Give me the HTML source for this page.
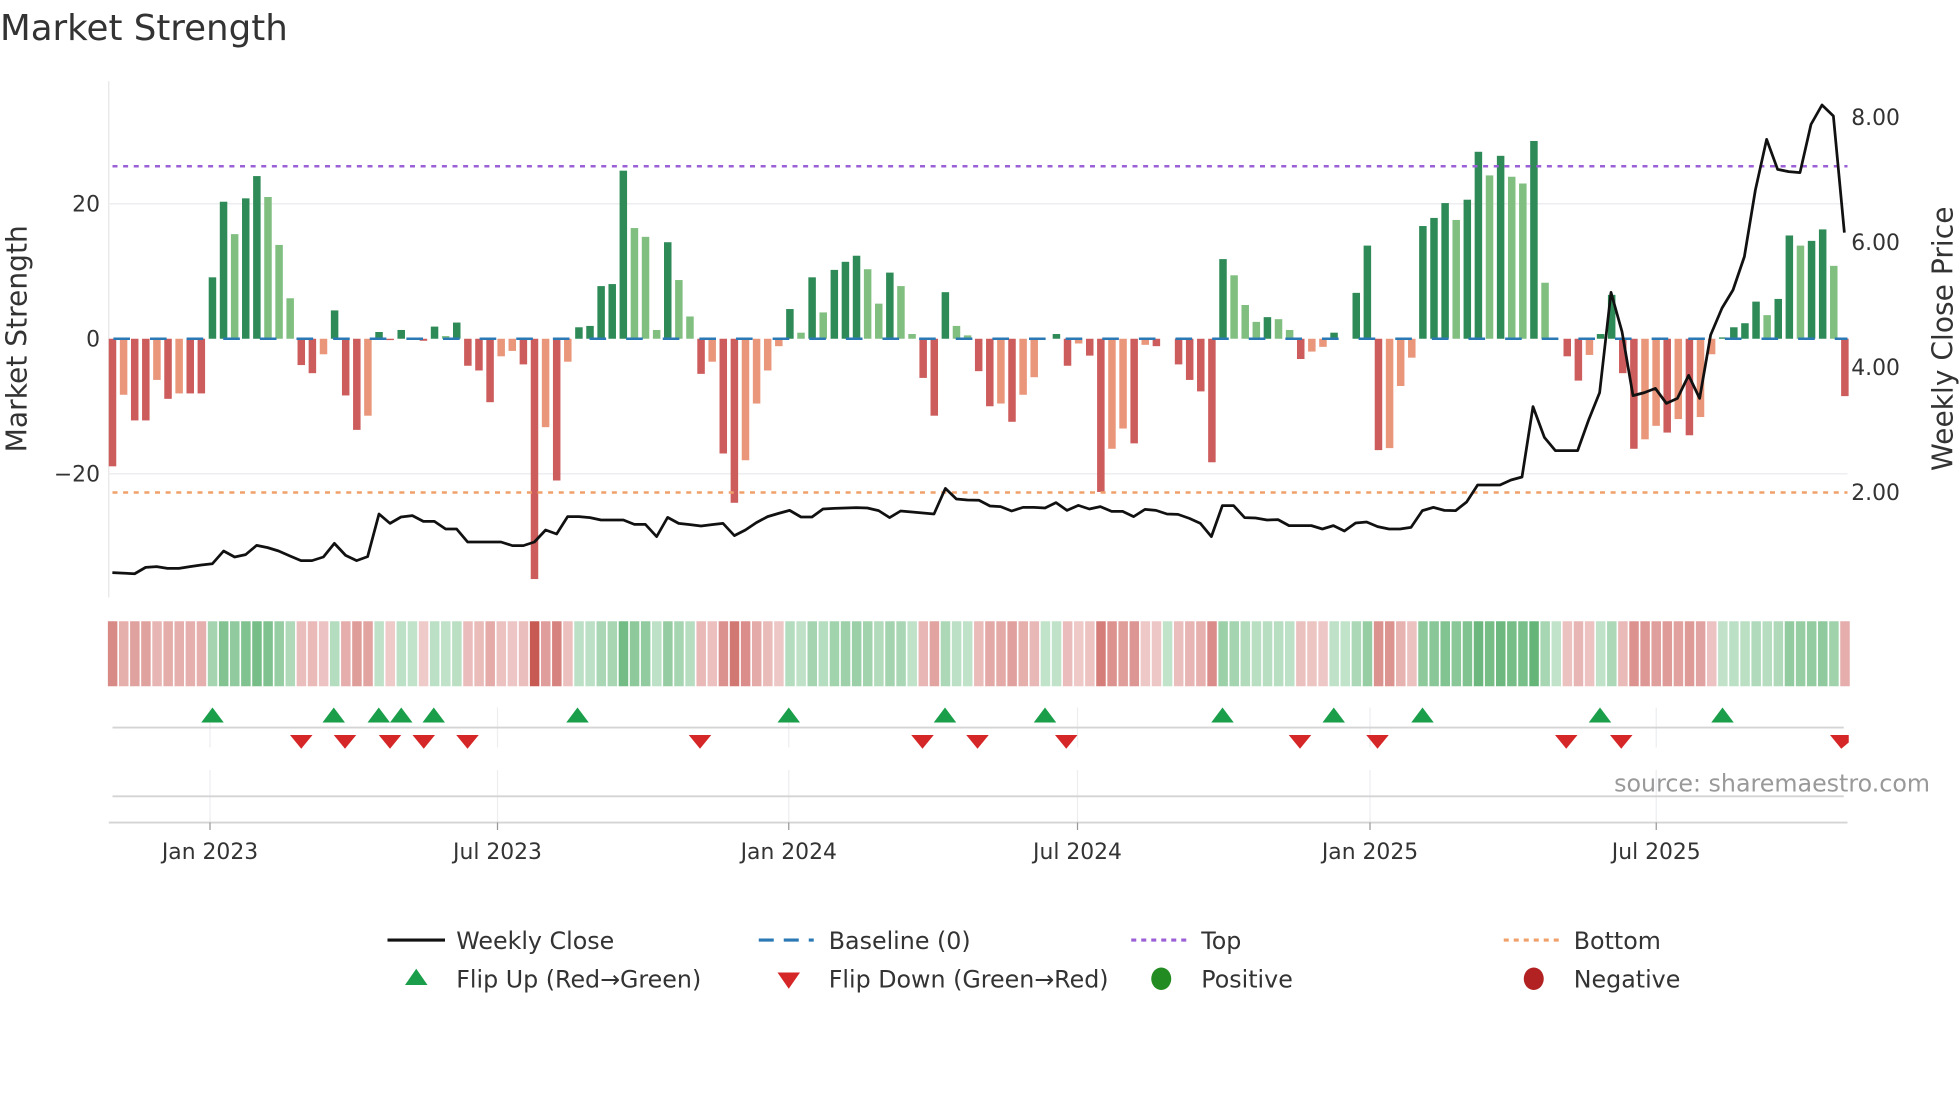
<!DOCTYPE html>
<html><head><meta charset="utf-8">
<style>
html,body{margin:0;padding:0;background:#fff;}
svg{display:block;}
text{font-family:"DejaVu Sans","Liberation Sans",sans-serif;fill:#333;}
</style></head>
<body>
<svg id="c" width="1960" height="1102" viewBox="0 0 1568 881.6" xmlns="http://www.w3.org/2000/svg">
<rect width="1568" height="882" fill="#fff"/>
<text x="0" y="32" font-size="28.5">Market Strength</text>
<line x1="87" y1="65" x2="87" y2="478" stroke="#e6e6e6" stroke-width="1"/>
<line x1="87" y1="163" x2="1478" y2="163" stroke="#eceef0" stroke-width="1.2"/>
<line x1="87" y1="379" x2="1478" y2="379" stroke="#eceef0" stroke-width="1.2"/>
<g id="bars"></g>
<line x1="90" y1="133" x2="1478" y2="133" stroke="#9b5fd6" stroke-width="2" stroke-dasharray="4,4.5"/>
<line x1="90" y1="394" x2="1478" y2="394" stroke="#f0a06a" stroke-width="2" stroke-dasharray="4,4.5"/>
<line x1="90.7" y1="271" x2="1478" y2="271" stroke="#2a78b4" stroke-width="2" stroke-dasharray="13.3,16"/>
<polyline id="price" fill="none" stroke="#111" stroke-width="2.2" stroke-linejoin="round"/>
<g font-size="17.5">
<text x="80" y="169" text-anchor="end">20</text>
<text x="80" y="277" text-anchor="end">0</text>
<text x="80" y="385" text-anchor="end">−20</text>
<text x="1481" y="100">8.00</text>
<text x="1481" y="200">6.00</text>
<text x="1481" y="300">4.00</text>
<text x="1481" y="400">2.00</text>
</g>
<text transform="translate(21,271) rotate(-90)" font-size="22.5" text-anchor="middle">Market Strength</text>
<text transform="translate(1562,271) rotate(-90)" font-size="22.5" text-anchor="middle">Weekly Close Price</text>
<g id="strip"></g>
<g stroke="#eceef0" stroke-width="1">
<line x1="168" y1="566" x2="168" y2="598"/><line x1="398" y1="566" x2="398" y2="598"/>
<line x1="631" y1="566" x2="631" y2="598"/><line x1="862" y1="566" x2="862" y2="598"/>
<line x1="1096" y1="566" x2="1096" y2="598"/><line x1="1325" y1="566" x2="1325" y2="598"/>
<line x1="168" y1="616" x2="168" y2="658"/><line x1="398" y1="616" x2="398" y2="658"/>
<line x1="631" y1="616" x2="631" y2="658"/><line x1="862" y1="616" x2="862" y2="658"/>
<line x1="1096" y1="616" x2="1096" y2="658"/><line x1="1325" y1="616" x2="1325" y2="658"/>
</g>
<line x1="90" y1="582" x2="1475" y2="582" stroke="#d4d4d4" stroke-width="1.5"/>
<line x1="90" y1="637" x2="1475" y2="637" stroke="#d4d4d4" stroke-width="1.5"/>
<line x1="87" y1="658" x2="1478" y2="658" stroke="#d4d4d4" stroke-width="1.5"/>
<g stroke="#999" stroke-width="1">
<line x1="168" y1="658" x2="168" y2="664"/><line x1="398" y1="658" x2="398" y2="664"/>
<line x1="631" y1="658" x2="631" y2="664"/><line x1="862" y1="658" x2="862" y2="664"/>
<line x1="1096" y1="658" x2="1096" y2="664"/><line x1="1325" y1="658" x2="1325" y2="664"/>
</g>
<g id="marks"></g>
<text x="1544" y="633" font-size="19" text-anchor="end" style="fill:#999">source: sharemaestro.com</text>
<g font-size="17.5" text-anchor="middle">
<text x="168" y="687">Jan 2023</text><text x="398" y="687">Jul 2023</text>
<text x="631" y="687">Jan 2024</text><text x="862" y="687">Jul 2024</text>
<text x="1096" y="687">Jan 2025</text><text x="1325" y="687">Jul 2025</text>
</g>
<g font-size="19">
<line x1="310" y1="752" x2="356" y2="752" stroke="#111" stroke-width="2.5"/>
<text x="365" y="759">Weekly Close</text>
<line x1="607" y1="752" x2="651" y2="752" stroke="#2a78b4" stroke-width="2.5" stroke-dasharray="12,8"/>
<text x="663" y="759">Baseline (0)</text>
<line x1="905" y1="752" x2="949" y2="752" stroke="#9b5fd6" stroke-width="2.5" stroke-dasharray="4,4"/>
<text x="961" y="759">Top</text>
<line x1="1203" y1="752" x2="1247" y2="752" stroke="#f0a06a" stroke-width="2.5" stroke-dasharray="4,4"/>
<text x="1259" y="759">Bottom</text>
<polygon points="324,788 342,788 333,775" fill="#1a9e4a"/>
<text x="365" y="790">Flip Up (Red→Green)</text>
<polygon points="622,778 640,778 631,791" fill="#d62728"/>
<text x="663" y="790">Flip Down (Green→Red)</text>
<ellipse cx="929" cy="783" rx="8" ry="9" fill="#228b22"/>
<text x="961" y="790">Positive</text>
<ellipse cx="1227" cy="783" rx="8" ry="9" fill="#b22222"/>
<text x="1259" y="790">Negative</text>
</g>
</svg>
<script>
(function(){
var NS="http://www.w3.org/2000/svg";
var d="R-18.9,O-8.3,R-12.1,R-12.1,O-6.1,R-8.9,O-8.1,R-8.1,R-8.1,D9.1,D20.3,L15.5,D20.8,D24.1,L21,L13.9,L6,R-3.9,R-5.1,O-2.3,D4.2,R-8.4,R-13.5,O-11.4,D1,R-0.2,D1.3,L0.1,R-0.3,D1.8,L0.4,D2.4,R-4,R-4.7,R-9.4,O-2.6,O-1.8,R-3.8,R-35.6,O-13.1,R-21,O-3.4,D1.7,D1.9,D7.8,D8.1,D24.9,L16.4,L15.1,L1.3,D14.3,L8.7,L3.3,R-5.2,O-3.4,R-17,R-24.3,O-18,O-9.6,O-4.7,O-1.1,D4.4,L0.9,D9.1,L3.9,D10.2,D11.4,D12.3,L10.3,L5.2,D9.8,L7.8,L0.7,R-5.8,R-11.4,D6.9,L1.9,L0.5,R-4.8,R-10,O-9.6,R-12.3,O-8.3,O-5.7,D0,D0.7,R-4,O-0.7,R-2.5,R-22.7,O-16.3,O-13.3,R-15.5,O-0.9,R-1.1,D0,R-3.8,R-6.1,R-7.8,R-18.3,D11.8,L9.4,L5,L2.5,D3.2,L2.9,L1.3,R-3,O-1.9,O-1.2,D0.9,D0,D6.8,D13.8,R-16.5,O-16.2,O-7,O-2.8,D16.7,D17.9,D20.1,L17.6,D20.6,D27.7,L24.2,D27.1,L24,L23,D29.3,L8.3,D0,R-2.6,R-6.2,O-2.4,D0.7,D6.5,R-5.1,R-16.3,O-14.9,O-12.9,R-13.9,O-11.9,R-14.3,O-11.6,O-2.3,D0.2,D1.7,D2.3,D5.5,L3.5,D5.9,D15.3,L13.8,D14.5,D16.2,L10.8,R-8.5".split(",");
var col={D:"#2e8b57",L:"#80bf80",R:"#cd5c5c",O:"#e9967a"};
var bars=document.getElementById("bars"),strip=document.getElementById("strip");
function mix(a,b,t){return "rgb("+[0,1,2].map(function(i){return Math.round(a[i]+(b[i]-a[i])*t)}).join(",")+")";}
for(var i=0;i<d.length;i++){
 var t=d[i][0],v=parseFloat(d[i].slice(1)),x=90+i*8.884;
 if(v!==0){var r=document.createElementNS(NS,"rect");
  var h=Math.abs(v)*5.4;r.setAttribute("x",(x-3).toFixed(2));r.setAttribute("width","6");
  r.setAttribute("y",(v>0?271-h:271).toFixed(2));r.setAttribute("height",h.toFixed(2));
  r.setAttribute("fill",col[t]);bars.appendChild(r);}
 var s=document.createElementNS(NS,"rect");
 s.setAttribute("x",(x-3.7).toFixed(2));s.setAttribute("width","7.6");s.setAttribute("y","497");s.setAttribute("height","52");
 var m=Math.min(Math.abs(v)/33,1),tt=0.18+0.82*m;
 s.setAttribute("fill",(t=="R"||t=="O")?mix([247,228,228],[200,90,84],tt):mix([216,238,222],[90,175,110],tt));
 strip.appendChild(s);
}
var p="89.9,458.1 107.7,459 116.5,453.9 125.3,453.3 134,454.7 143.2,454.7 152,453.3 161,452 169.9,451 178.9,440.8 187.7,445.6 196.5,443.7 205.3,436.3 214.1,438.1 222.9,440.8 232,444.8 240.8,448.5 249.6,448.5 258.7,445.6 267.5,434.7 276.5,444.3 285.3,448.5 294.1,445.3 303.2,411.2 312,418.7 320.8,413.6 329.9,412.5 338.7,417.1 347.5,417.1 356.5,423.2 365.3,423.2 374.1,433.6 400.8,433.6 409.9,436.5 418.7,436.5 427.5,433.6 436.5,424 445.3,427.2 454.1,413.3 463.2,413.3 472,414.1 480.8,416 498.7,416 507.5,419.5 516.3,419.5 525.3,429.3 534.1,413.9 542.9,418.7 552,419.7 560.8,420.8 569.6,419.7 578.4,418.7 587.5,428.5 596.3,424 605.1,418.1 614.1,413.3 622.9,410.7 631.7,408.3 640.8,413.6 649.6,413.6 658.4,407.2 667.2,406.7 685.1,406.1 693.9,406.4 702.9,408.5 711.7,414.1 720.5,408.8 729.6,409.6 738.4,410.4 747.2,411.2 756.3,390.7 765.1,399.2 773.9,400 783.2,400.2 792,404.8 800.5,405.3 809.3,408.8 818.4,405.9 827.2,405.9 836,406.4 844.8,402.1 853.6,408.3 862.7,404.3 871.5,407.2 880.3,405.3 889.3,409.1 898.1,409.1 906.9,413.3 916,407.5 924.8,408.3 933.6,411.2 942.4,411.5 951.5,414.7 960.3,418.7 969.1,429.3 977.9,404.5 986.9,404.5 995.7,414.1 1004.5,414.4 1013.6,416 1022.4,415.7 1031.2,420.5 1049.1,420.5 1057.9,423.2 1066.7,420.5 1075.5,424.8 1084.5,418.4 1093.3,417.6 1102.1,421.3 1111.2,423.2 1120,423.2 1128.8,421.9 1137.9,408.5 1146.7,405.9 1155.5,408.3 1164.5,408.5 1173.3,401.6 1182.1,388 1200,388 1208.8,384 1217.6,381.6 1226.4,325.3 1235.5,349.9 1244.3,360.5 1262.1,360.5 1270.9,336 1279.7,314.1 1288.8,233.9 1297.6,265.3 1306.4,316.5 1315.5,314.1 1324.3,310.7 1333.1,322.7 1341.9,318.7 1350.9,300.3 1359.7,318.7 1368.5,268 1377.6,246.5 1386.4,232 1395.5,205.3 1404.3,152 1413.3,111.5 1422.1,135.5 1430.9,137.3 1440,138.1 1448.8,99.5 1457.6,84 1466.7,92.8 1475.5,186.1";
document.getElementById("price").setAttribute("points",p);
var mk=document.getElementById("marks");
[170,267,303,321,347,462,631,756,836,978,1067,1138,1280,1378].forEach(function(x){
 var g=document.createElementNS(NS,"polygon");g.setAttribute("points",(x-9)+",578 "+(x+9)+",578 "+x+",566");g.setAttribute("fill","#1a9e4a");mk.appendChild(g);});
[241,276,312,339,374,560,738,782,853,1040,1102,1253,1297,1473].forEach(function(x){
 var g=document.createElementNS(NS,"polygon");var x2=Math.min(x+9,1479);g.setAttribute("points",(x-9)+",588 "+x2+",588 "+(x2<x+9?x2+",594 ":"")+x+",599");g.setAttribute("fill","#d62728");mk.appendChild(g);});
})();
</script>
</body></html>
